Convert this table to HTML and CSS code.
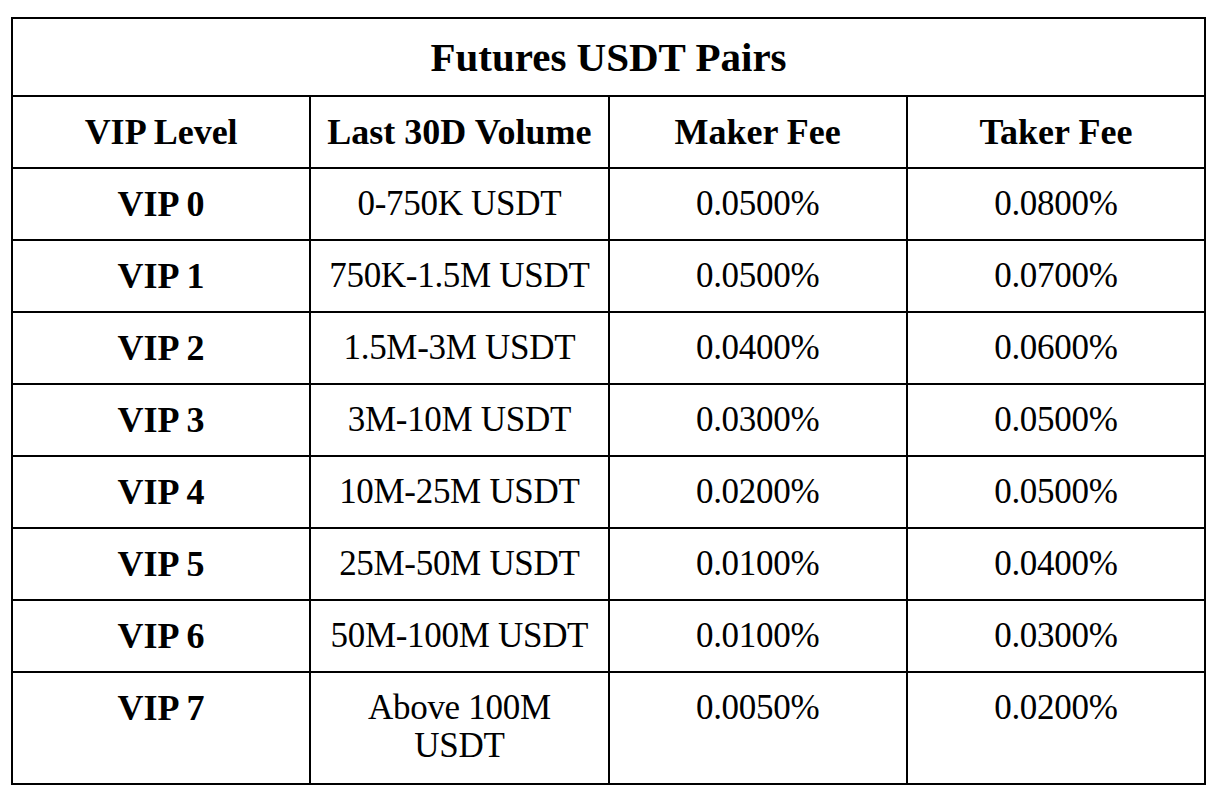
FILE: index.html
```html
<!DOCTYPE html>
<html lang="en">
<head>
<meta charset="utf-8">
<title>Futures USDT Pairs</title>
<link rel="stylesheet" href="styles.css">
</head>
<body>
<table class="fees">
  <colgroup><col><col><col><col></colgroup>
  <thead>
    <tr class="title-row"><th colspan="4">Futures USDT Pairs</th></tr>
    <tr class="head-row"><th>VIP Level</th><th>Last 30D Volume</th><th>Maker Fee</th><th>Taker Fee</th></tr>
  </thead>
  <tbody>
    <tr><th>VIP 0</th><td>0-750K USDT</td><td>0.0500%</td><td>0.0800%</td></tr>
    <tr><th>VIP 1</th><td>750K-1.5M USDT</td><td>0.0500%</td><td>0.0700%</td></tr>
    <tr><th>VIP 2</th><td>1.5M-3M USDT</td><td>0.0400%</td><td>0.0600%</td></tr>
    <tr><th>VIP 3</th><td>3M-10M USDT</td><td>0.0300%</td><td>0.0500%</td></tr>
    <tr><th>VIP 4</th><td>10M-25M USDT</td><td>0.0200%</td><td>0.0500%</td></tr>
    <tr><th>VIP 5</th><td>25M-50M USDT</td><td>0.0100%</td><td>0.0400%</td></tr>
    <tr><th>VIP 6</th><td>50M-100M USDT</td><td>0.0100%</td><td>0.0300%</td></tr>
    <tr class="last-row"><th>VIP 7</th><td>Above 100M<br>USDT</td><td>0.0050%</td><td>0.0200%</td></tr>
  </tbody>
</table>
</body>
</html>
```
FILE: styles.css
```css
html, body {
  margin: 0;
  padding: 0;
  background: #ffffff;
}

body {
  padding: 17px 0 0 11px;
  font-family: "Liberation Serif", "Times New Roman", serif;
  color: #000;
}

.fees {
  border-collapse: collapse;
  table-layout: fixed;
  width: 1195px;
  border: 2px solid #000;
}

.fees col {
  width: 25%;
}

.fees th,
.fees td {
  border: 2px solid #000;
  padding: 16px 6px;
  text-align: center;
  vertical-align: top;
  font-size: 35px;
  line-height: 38px;
  letter-spacing: -0.3px;
}

.fees th {
  font-weight: bold;
  font-size: 36px;
  letter-spacing: 0;
}

.fees td {
  font-weight: normal;
}

.title-row th {
  font-size: 41px;
  line-height: 44px;
}

.last-row th,
.last-row td {
  padding-bottom: 18px;
}
```
